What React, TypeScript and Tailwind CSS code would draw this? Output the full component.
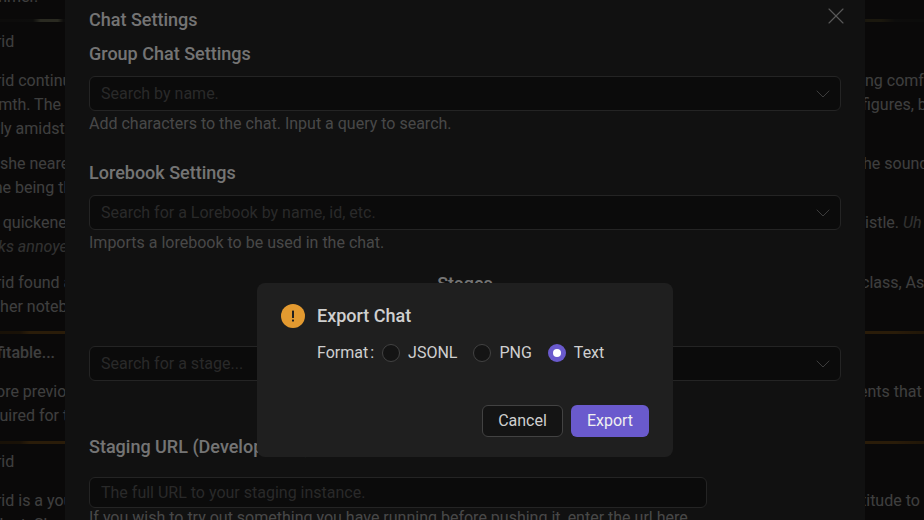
import React from 'react';
import { ChevronDown, X } from 'lucide-react';

const topDivider =
    'h-[3px] bg-[linear-gradient(90deg,#2a2826_0%,#2e2c28_6.4%,#8c8c70_7.2%,#8c8c70_9%,#2e2c28_9.6%,#2e2c28_93%,#5c5030_94%,#5c5030_95.5%,#2e2c28_97%,#2a2826_100%)]';
const divider =
    'h-[3px] bg-[linear-gradient(90deg,#4a3418_0%,#573c1a_5%,#8c5e21_6%,#8c5e21_10%,#6b4a1c_50%,#6b4a1c_92%,#8c5e21_94%,#8c5e21_97%,#6b4a1c_100%)]';

const Row = ({ l, r, className = '' }: { l: React.ReactNode; r?: React.ReactNode; className?: string }) => (
    <div className={`flex justify-between whitespace-nowrap text-base leading-6 ${className}`}>
        <span className="w-[93px] overflow-hidden">{l}</span>
        <span className="w-[59px] overflow-hidden">{r}</span>
    </div>
);

const SelectBox = ({ placeholder }: { placeholder: string }) => (
    <div className="mt-2 flex h-[35px] items-center rounded-md border border-[#424242] bg-[#141414] pl-[11px] pr-[5px]">
        <input
            readOnly
            placeholder={placeholder}
            className="min-w-0 flex-1 bg-transparent text-base outline-none placeholder:text-[#4c4c4c]"
        />
        <ChevronDown className="h-6 w-6 text-[#6e6e6e]" strokeWidth={1} />
    </div>
);

const Radio = ({ label, checked }: { label: string; checked?: boolean }) => (
    <div className="flex items-center gap-2">
        {checked ? (
            <span className="flex h-[18px] w-[18px] items-center justify-center rounded-full bg-[#6a5acd]">
                <span className="h-2 w-2 rounded-full bg-white" />
            </span>
        ) : (
            <span className="h-[18px] w-[18px] rounded-full border border-[#424242] bg-[#141414]" />
        )}
        <span>{label}</span>
    </div>
);

export default function App() {
    return (
        <div className="relative h-[520px] w-[924px] overflow-hidden bg-[#242120] font-['Roboto',sans-serif] text-[#d0d0d0]">
            {/* Chat underneath */}
            <div className="-mt-[15px] -ml-7 w-[952px]">
                <Row l="shimmer." />
                <div className={`mt-[10px] ${topDivider}`} />
                <Row className="mt-[8px]" l="Astrid" />
                <Row className="mt-[15px]" l="Astrid continuing" r="ng comfort" />
                <Row l="warmth. The" r={<span className="-ml-[3px] block">figures, but</span>} />
                <Row l="softly amidst" />
                <Row className="mt-[11px]" l="But she neared" r={<span className="-ml-[2px] block">he sound</span>} />
                <Row l="alone being the" />
                <Row className="mt-[11px]" l="She quickened" r={<>istle. <em className="text-white/60">Uh</em></>} />
                <Row l={<em className="text-white/60">Looks annoyed</em>} />
                <Row className="mt-3" l="Astrid found a" r={<span className="-ml-[4px] block">class, Ash</span>} />
                <Row l="Put her notebook" />
                <div className={`mt-3 ${divider}`} />
                <Row className="mt-[7px] font-medium" l="Profitable..." />
                <Row className="mt-[15px]" l="Before previous" r={<span className="-ml-[6px] block">ents that</span>} />
                <Row l="Required for the" />
                <div className={`mt-[13px] ${divider}`} />
                <Row className="mt-[6px]" l="Astrid" />
                <Row className="mt-[15px]" l="Astrid is a young" r={<span className="-ml-[4px] block">titude to</span>} />
                <Row l="student. She" />
            </div>

            {/* Mask behind Chat Settings */}
            <div className="absolute inset-0 bg-black/45" />

            {/* Chat Settings modal */}
            <div className="absolute left-[65px] top-0 h-[560px] w-[800px] bg-[#1f1f1f] px-6 pt-[6px] text-[#d4d4d4]">
                <X className="absolute right-[15px] top-[2px] h-7 w-7 text-[#a0a0a0]" strokeWidth={1} />
                <h2 className="text-lg leading-7 font-medium">Chat Settings</h2>

                <h3 className="mt-[6px] text-lg leading-7 font-medium">Group Chat Settings</h3>
                <SelectBox placeholder="Search by name." />
                <p className="mt-[1px] text-base leading-6 text-white/45">Add characters to the chat. Input a query to search.</p>

                <h3 className="mt-[23px] text-lg leading-7 font-medium">Lorebook Settings</h3>
                <SelectBox placeholder="Search for a Lorebook by name, id, etc." />
                <p className="mt-[1px] text-base leading-6 text-white/45">Imports a lorebook to be used in the chat.</p>

                <h3 className="mt-[15px] text-center text-lg leading-7 font-medium">Stages</h3>
                <div className="mt-[48px] [&>div]:mt-0">
                    <SelectBox placeholder="Search for a stage..." />
                </div>

                <h3 className="mt-[52px] text-lg leading-7 font-medium">Staging URL (Development)</h3>
                <input
                    readOnly
                    placeholder="The full URL to your staging instance."
                    className="mt-4 block h-[31px] w-[618px] rounded-md border border-[#424242] bg-[#141414] px-[11px] text-base outline-none placeholder:text-[#4c4c4c]"
                />
                <p className="-mt-[2px] text-base leading-6 text-white/45">
                    If you wish to try out something you have running before pushing it, enter the url here.
                </p>
            </div>

            {/* Mask behind Export Chat */}
            <div className="absolute inset-0 bg-black/45" />

            {/* Export Chat dialog */}
            <div className="absolute left-[257px] top-[283px] flex h-[174px] w-[416px] flex-col rounded-lg bg-[#1f1f1f] px-6 pb-5 pt-[21px] text-base text-[#cfcfcf]">
                <div className="flex h-6 items-center gap-3">
                    <svg className="h-6 w-6" viewBox="0 0 24 24">
                        <circle cx="12" cy="12" r="12" fill="#e39a30" />
                        <rect x="11" y="6.5" width="2" height="7.5" rx="0.6" fill="#1f1f1f" />
                        <rect x="11" y="15.5" width="2" height="2" rx="0.5" fill="#1f1f1f" />
                    </svg>
                    <span className="text-lg leading-6 font-medium">Export Chat</span>
                </div>

                <div className="ml-9 mt-[13px] flex h-6 items-center">
                    <span>Format</span>
                    <span className="ml-[2px] mr-2">:</span>
                    <div className="flex items-center gap-4">
                        <Radio label="JSONL" />
                        <Radio label="PNG" />
                        <Radio label="Text" checked />
                    </div>
                </div>

                <div className="mt-auto flex justify-end gap-2">
                    <button className="h-8 w-[81px] rounded-md border border-[#424242] bg-[#141414]">Cancel</button>
                    <button className="h-8 w-[78px] rounded-md bg-[#6a5acd] text-[#f0f0f0]">Export</button>
                </div>
            </div>
        </div>
    );
}
